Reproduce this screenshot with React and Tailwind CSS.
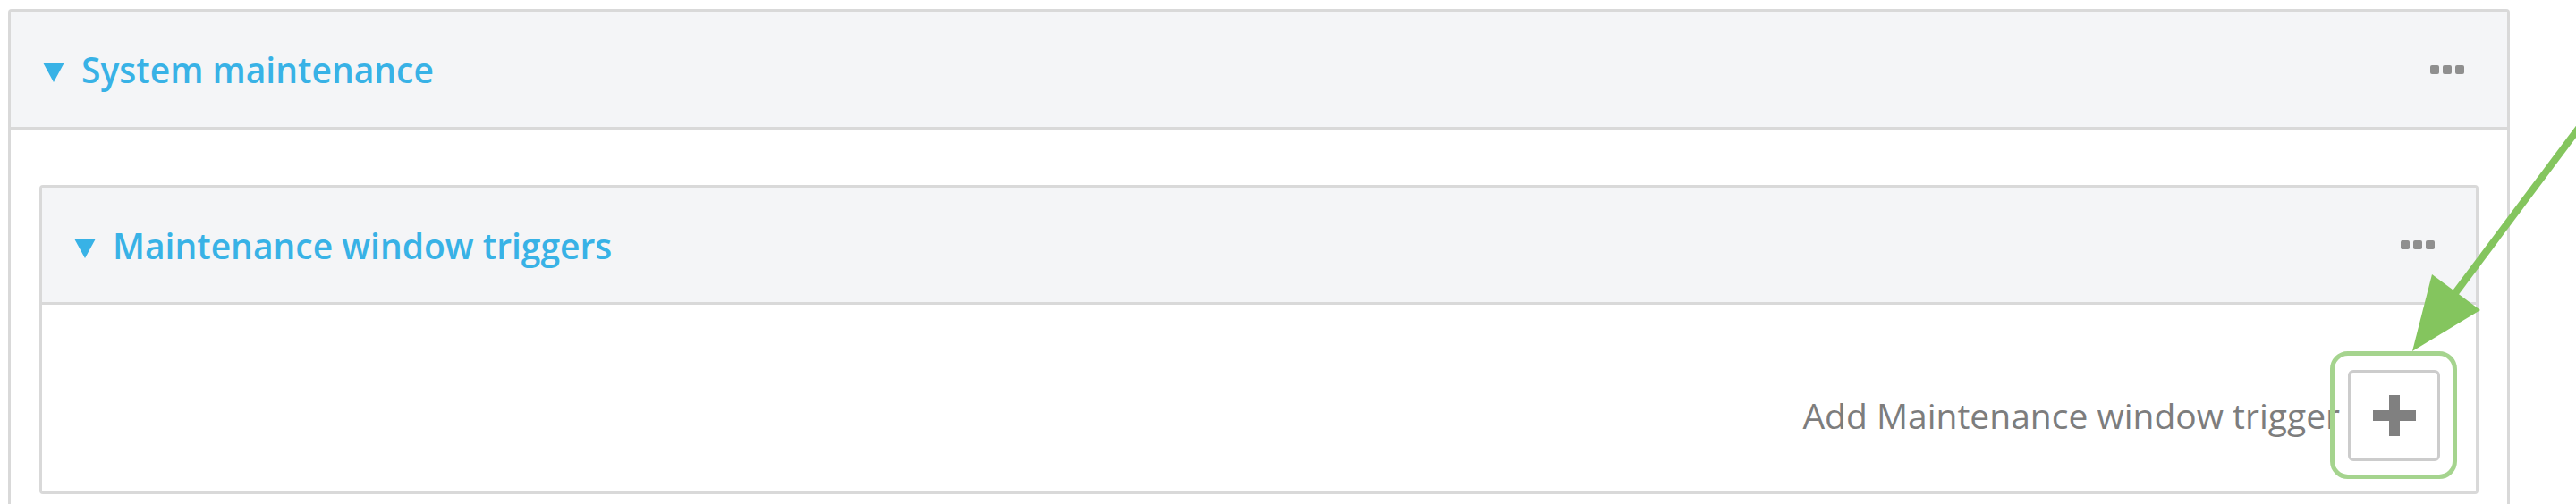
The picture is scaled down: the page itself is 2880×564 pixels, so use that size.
import React from 'react'

const font = { fontFamily: '"Open Sans", "Liberation Sans", sans-serif' }

const Caret = () => (
  <svg width="24" height="22" viewBox="0 0 24 22" className="mt-[7px] shrink-0">
    <polygon points="0,0 24,0 12,22" fill="#38b2e6" />
  </svg>
)

const Dots = () => (
  <div className="flex gap-[4px]">
    <span className="w-[10px] h-[10px] rounded-[2px] bg-[#8f8f8f]" />
    <span className="w-[10px] h-[10px] rounded-[2px] bg-[#8f8f8f]" />
    <span className="w-[10px] h-[10px] rounded-[2px] bg-[#8f8f8f]" />
  </div>
)

const PanelHeader = ({ title, className }) => (
  <div className={`flex items-center justify-between bg-[#f4f5f7] border-b-[3px] border-[#d9d9d9] pl-9 ${className}`}>
    <div className="flex items-center gap-[19px]">
      <Caret />
      <h2 className="text-[39px] font-semibold text-[#38b2e6] leading-none">{title}</h2>
    </div>
    <Dots />
  </div>
)

const App = () => {
  return (
    <div className="relative w-[2880px] h-[564px] overflow-hidden bg-white" style={font}>
      {/* System maintenance */}
      <div className="ml-[9px] mt-[10px] w-[2797px] h-[600px] border-[3px] border-b-0 border-[#d9d9d9] rounded-t-[4px]">
        <PanelHeader title="System maintenance" className="h-[132px] pr-12" />

        <div className="px-8 pt-[62px]">
          {/* Maintenance window triggers */}
          <div className="border-[3px] border-[#d9d9d9] rounded-[4px]">
            <PanelHeader title="Maintenance window triggers" className="h-[131px] pr-[46px]" />
            <div className="h-[209px] flex justify-end items-start pt-[73px] pr-[40px]">
              <div className="flex items-center gap-[9px]">
                <span className="text-[39px] text-[#7d7d7d] leading-[1.36]">Add Maintenance window trigger</span>
                <button className="w-[103px] h-[102px] border-[3px] border-[#cccccc] rounded-[6px] bg-white flex items-center justify-center">
                  <svg width="48" height="46" viewBox="0 0 48 46">
                    <rect x="0" y="17" width="48" height="12" fill="#808080" />
                    <rect x="18" y="0" width="12" height="46" fill="#808080" />
                  </svg>
                </button>
              </div>
            </div>
          </div>
        </div>
      </div>

      {/* Annotation: highlight box */}
      <div className="absolute left-[2605px] top-[393px] w-[142px] h-[143px] border-[5px] border-[#a5d48e] rounded-[20px]" />

      {/* Annotation: arrow */}
      <svg className="absolute left-0 top-0" width="2880" height="564" viewBox="0 0 2880 564">
        <line x1="2884" y1="142" x2="2742" y2="332" stroke="#84c55e" strokeWidth="8" />
        <polygon points="2697,393 2719,307 2773,347" fill="#84c55e" />
      </svg>
    </div>
  )
}

export default App
